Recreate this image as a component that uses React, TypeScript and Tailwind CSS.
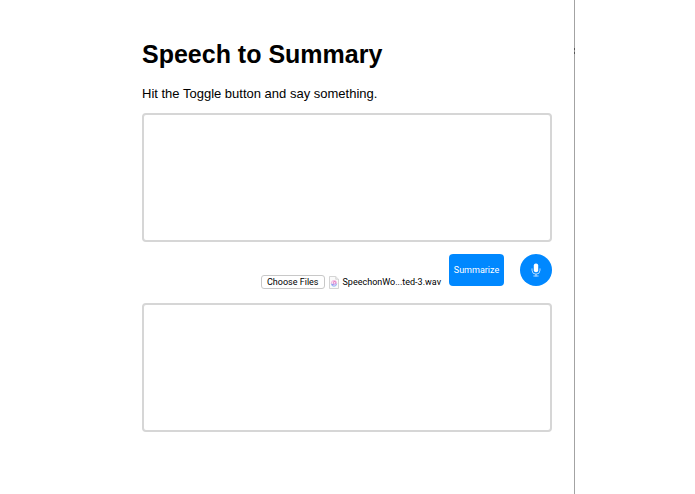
import { useState } from "react";

const NOTE_BOX =
  "block h-[129px] w-full resize-none rounded border-2 border-[#d6d6d6] bg-white p-2 text-[13px] outline-none focus:border-[#0088ff]";

function MicIcon() {
  return (
    <svg width="10" height="14" viewBox="0 0 10 14" fill="none" aria-hidden>
      <rect x="2.8" y="0.6" width="4.4" height="8.6" rx="2" fill="#fff" />
      <path d="M1 5.8v1.4a4 4 0 0 0 8 0V5.8" stroke="#e0efff" strokeWidth="0.8" strokeLinecap="round" />
      <path d="M5 11.2v1.8M2.8 13h4.4" stroke="#e0efff" strokeWidth="0.8" strokeLinecap="round" />
    </svg>
  );
}

function AudioFileIcon() {
  return (
    <svg width="10" height="13" viewBox="0 0 10 13" fill="none" aria-hidden>
      <path d="M0.5 0.5h6.2l2.8 2.8v9.2h-9z" fill="#fafafa" stroke="#c9c9c9" strokeWidth="0.8" />
      <path d="M6.7 0.5v2.8h2.8" fill="#e8e8e8" stroke="#c9c9c9" strokeWidth="0.6" />
      <circle cx="5" cy="7.2" r="2.7" fill="#fff" stroke="#f0a5dc" strokeWidth="0.8" />
      <path d="M2.3 7.6a2.7 2.7 0 0 0 5.4 0" stroke="#7cc4f7" strokeWidth="0.8" />
      <path d="M4.3 8.5V5.8l2-.4v2.7" stroke="#e06bb8" strokeWidth="0.8" />
      <circle cx="3.9" cy="8.5" r="0.7" fill="#7b74f0" />
      <circle cx="5.9" cy="8.1" r="0.7" fill="#9a6bf0" />
    </svg>
  );
}

/** Keeps the start and the end of a long file name. */
function shorten(name: string) {
  if (name.length <= 22) return name;
  return `${name.slice(0, 10)}...${name.slice(-9)}`;
}

export default function App() {
  const [transcript, setTranscript] = useState("");
  const [summary, setSummary] = useState("");
  const [fileName, setFileName] = useState("SpeechonWo...ted-3.wav");
  const [listening, setListening] = useState(false);

  return (
    <div className="flex min-h-screen bg-white font-['Liberation_Sans',Arial,sans-serif] text-black">
      <main className="min-w-0 flex-1 border-r border-[#a3a3a3] pt-9 pr-[22px] pb-8 pl-[142px]">
        <h1 className="text-[25px] leading-9 font-bold">Speech to Summary</h1>
        <p className="mt-3 text-[13px] leading-5">Hit the Toggle button and say something.</p>

        <textarea
          aria-label="Transcript"
          className={`mt-[9px] ${NOTE_BOX}`}
          value={transcript}
          onChange={(e) => setTranscript(e.target.value)}
        />

        <div className="mt-3 flex items-start justify-end font-[Roboto,sans-serif] text-[9px] leading-3">
          <div className="mt-[21px] mr-2 flex items-center gap-1">
            <label className="cursor-default rounded-[3px] border border-[#c8c8c8] bg-white px-[5px] whitespace-nowrap focus-within:border-[#0088ff]">
              Choose Files
              <input
                type="file"
                accept="audio/*"
                multiple
                className="sr-only"
                onChange={(e) => setFileName(e.target.files?.[0]?.name ?? "")}
              />
            </label>
            <AudioFileIcon />
            <span className="whitespace-nowrap">{shorten(fileName)}</span>
          </div>
          <button
            type="button"
            className="mr-4 h-8 w-[55px] rounded bg-[#0088ff] text-center text-white"
            onClick={() => setSummary(transcript.split(". ")[0])}
          >
            Summarize
          </button>
          <button
            type="button"
            aria-label="Toggle microphone"
            aria-pressed={listening}
            className="flex size-8 items-center justify-center rounded-full bg-[#0088ff]"
            onClick={() => setListening(!listening)}
          >
            <MicIcon />
          </button>
        </div>

        <textarea
          aria-label="Summary"
          className={`mt-[14px] ${NOTE_BOX}`}
          value={summary}
          onChange={(e) => setSummary(e.target.value)}
        />
      </main>

      {/* empty side pane with the resize grip on its divider */}
      <aside className="relative w-[120px] flex-none">
        <div className="absolute top-12 -left-px h-[6px] w-px border-y-2 border-[#555] bg-[#999]" />
      </aside>
    </div>
  );
}
